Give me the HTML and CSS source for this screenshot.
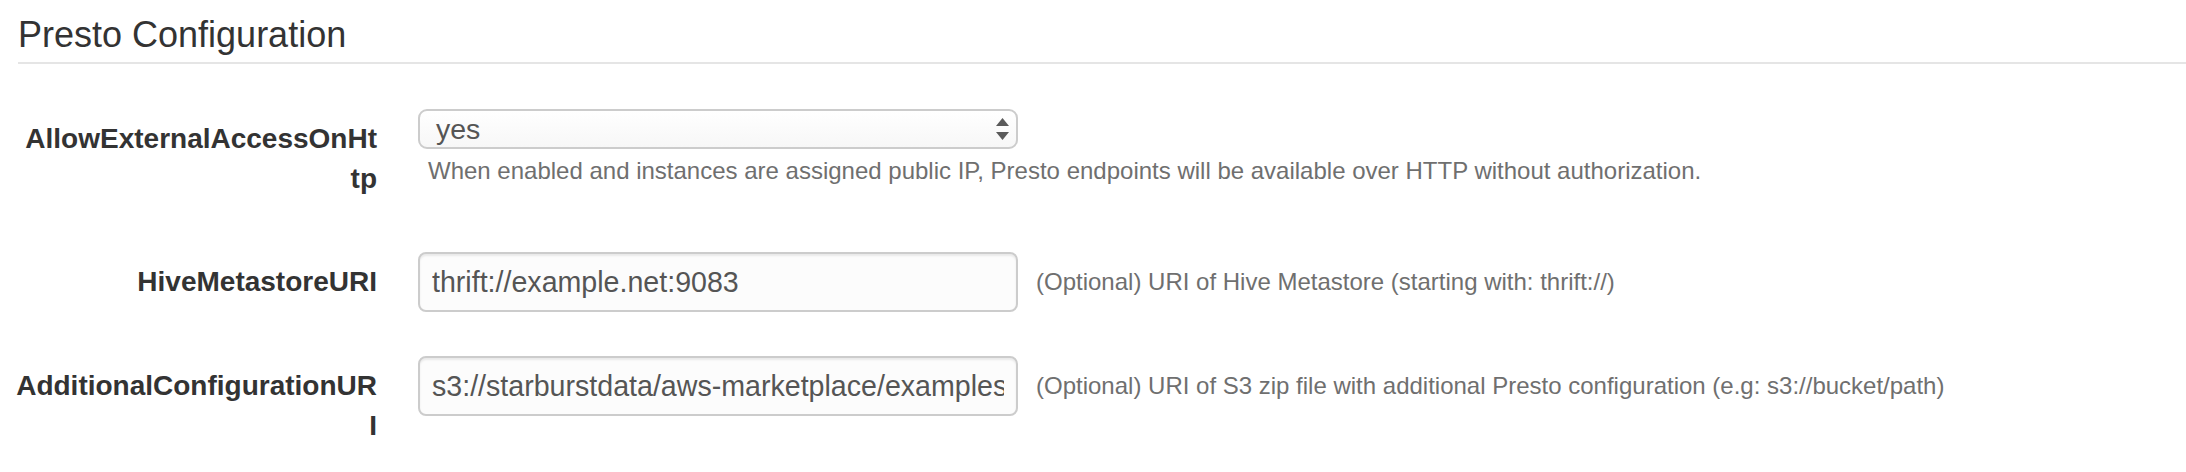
FILE: index.html
```html
<!DOCTYPE html>
<html lang="en">
<head>
<meta charset="utf-8">
<title>Presto Configuration</title>
<link rel="stylesheet" href="styles.css">
</head>
<body>
<div class="page">
  <h3 class="section-title">Presto Configuration</h3>
  <form class="form">
    <div class="form-row">
      <label class="form-label">AllowExternalAccessOnHt<br>tp</label>
      <div class="control control-stack">
        <div class="select">
          <span class="select-value">yes</span>
          <svg class="select-arrows" width="13" height="22" viewBox="0 0 13 22" aria-hidden="true">
            <polygon points="6.5,0 13,8 0,8" fill="#5a5a5a"/>
            <polygon points="0,14 13,14 6.5,22" fill="#5a5a5a"/>
          </svg>
        </div>
        <p class="help-block">When enabled and instances are assigned public IP, Presto endpoints will be available over HTTP without authorization.</p>
      </div>
    </div>
    <div class="form-row">
      <label class="form-label">HiveMetastoreURI</label>
      <div class="control control-inline">
        <input class="text-input" type="text" value="thrift://example.net:9083">
        <span class="help-inline">(Optional) URI of Hive Metastore (starting with: thrift://)</span>
      </div>
    </div>
    <div class="form-row">
      <label class="form-label">AdditionalConfigurationUR<br>I</label>
      <div class="control control-inline">
        <input class="text-input" type="text" value="s3://starburstdata/aws-marketplace/examples/presto-config.zip">
        <span class="help-inline">(Optional) URI of S3 zip file with additional Presto configuration (e.g: s3://bucket/path)</span>
      </div>
    </div>
  </form>
</div>
</body>
</html>
```

FILE: styles.css
```css
html, body {
  margin: 0;
  padding: 0;
  background: #ffffff;
}

body {
  font-family: "Liberation Sans", Arial, Helvetica, sans-serif;
  color: #333333;
}

.page {
  padding-top: 15px;
}

.section-title {
  margin: 0 0 45px 18px;
  padding: 0 0 7px 0;
  font-size: 36px;
  line-height: 40px;
  font-weight: normal;
  color: #333333;
  border-bottom: 2px solid #e5e5e5;
}

.form {
  display: flex;
  flex-direction: column;
  gap: 44px;
  margin: 0;
}

.form-row {
  display: flex;
  align-items: flex-start;
  gap: 41px;
}

.form-label {
  flex: none;
  width: 377px;
  box-sizing: border-box;
  padding-top: 10px;
  text-align: right;
  white-space: nowrap;
  font-size: 28px;
  line-height: 40px;
  font-weight: bold;
  color: #333333;
}

.control-stack {
  display: flex;
  flex-direction: column;
  align-items: flex-start;
}

.control-inline {
  display: flex;
  align-items: center;
}

.select {
  width: 600px;
  height: 40px;
  box-sizing: border-box;
  display: flex;
  align-items: center;
  justify-content: space-between;
  padding: 0 7px 0 16px;
  border: 2px solid #cccccc;
  border-radius: 9px;
  background: linear-gradient(#ffffff, #f7f7f7);
  font-size: 28.5px;
  color: #555555;
}

.select-value {
  line-height: 36px;
}

.select-arrows {
  display: block;
  flex: none;
}

.help-block {
  margin: 5px 0 20px 10px;
  font-size: 24px;
  line-height: 34px;
  color: #6f6f6f;
}

.text-input {
  flex: none;
  width: 600px;
  height: 60px;
  box-sizing: border-box;
  margin: 0;
  padding: 0 12px;
  border: 2px solid #cccccc;
  border-radius: 8px;
  background: #fcfcfc;
  box-shadow: inset 0 2px 2px rgba(0, 0, 0, 0.075);
  font-family: "Liberation Sans", Arial, Helvetica, sans-serif;
  font-size: 28.6px;
  color: #555555;
  outline: none;
}

.help-inline {
  margin-left: 18px;
  font-size: 24px;
  line-height: 34px;
  color: #6f6f6f;
  white-space: nowrap;
}
```
